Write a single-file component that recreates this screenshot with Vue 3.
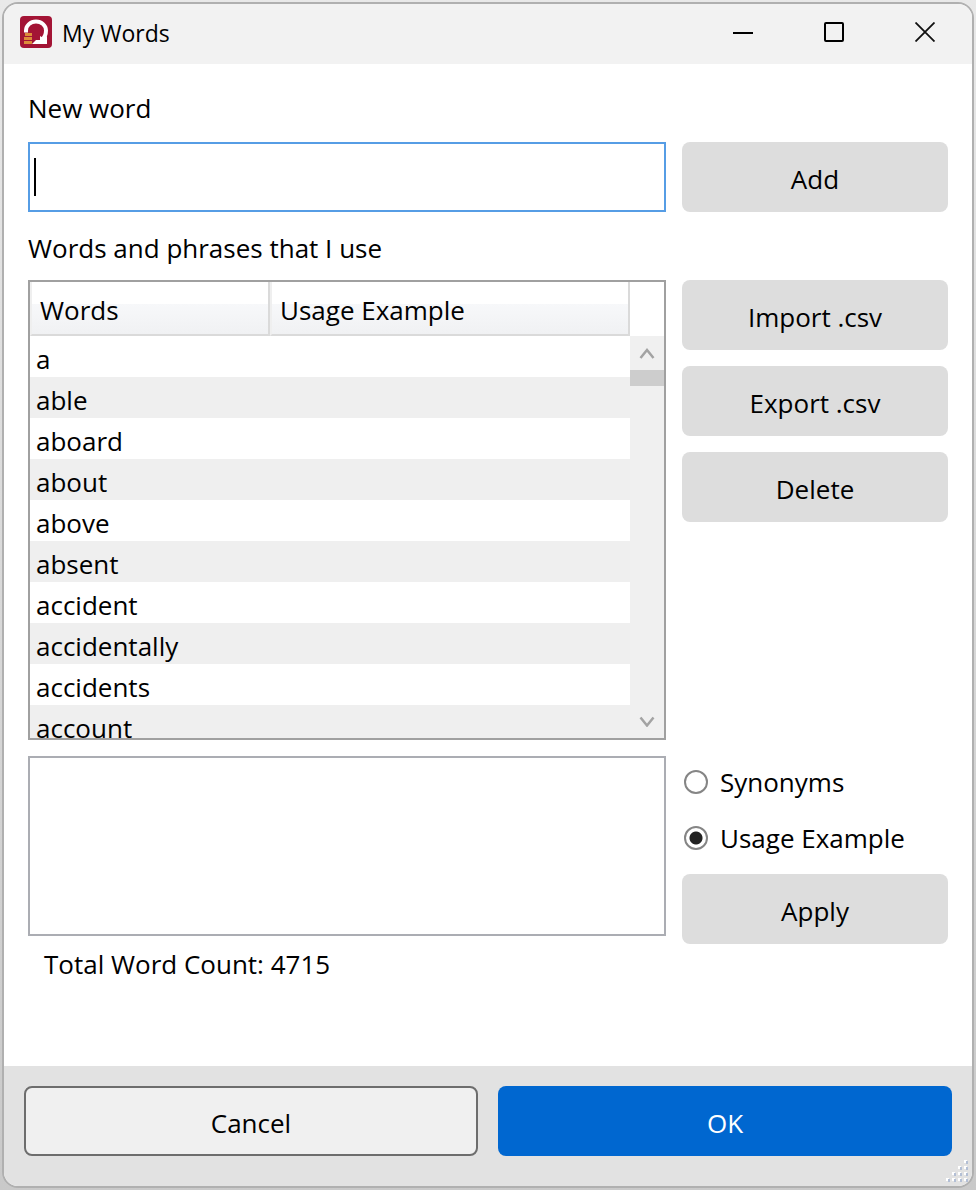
<script setup>
import { ref } from 'vue'

const WORDS = [
  'a', 'able', 'aboard', 'about', 'above',
  'absent', 'accident', 'accidentally', 'accidents', 'account',
]

const newWord = ref('')
const details = ref('')
const mode = ref('usage')
const total = ref(4715)
</script>

<template>
  <div class="window">
    <header class="titlebar">
      <svg class="logo" width="32" height="32" viewBox="0 0 32 32" aria-hidden="true">
        <rect width="32" height="32" rx="4" fill="#a31435" />
        <path d="M6 16.500V14.500A10 9 0 0 1 26 14.500C26 19 24.500 21.500 22 23.500" fill="none" stroke="#fff" stroke-width="4" />
        <path d="M12 28L16 24H20V20L24 22.500L27 20V28Z" fill="#fff" />
        <path d="M5 17h7v3H5zM4 21h8v3H4zM4 25h8v3H4z" fill="#dc8b3a" />
      </svg>
      <h1 class="titlebar__title">My Words</h1>
      <div class="titlebar__controls">
        <button type="button" class="winbtn" aria-label="Minimize">
          <svg width="20" height="20" viewBox="0 0 20 20"><path d="M0 11h20" stroke="#000" stroke-width="2" /></svg>
        </button>
        <button type="button" class="winbtn" aria-label="Maximize">
          <svg width="20" height="20" viewBox="0 0 20 20"><rect x="1" y="1" width="18" height="18" rx="1" fill="none" stroke="#000" stroke-width="2" /></svg>
        </button>
        <button type="button" class="winbtn" aria-label="Close">
          <svg width="20" height="20" viewBox="0 0 20 20"><path d="M0.500 0.500l19 19M19.500 0.500l-19 19" stroke="#111" stroke-width="1.800" /></svg>
        </button>
      </div>
    </header>

    <main class="content">
      <label class="label" for="new-word">New word</label>
      <div class="row">
        <div class="entry">
          <input id="new-word" v-model="newWord" type="text" class="entry__input" autocomplete="off" />
          <span v-if="!newWord" class="entry__caret"></span>
        </div>
        <button type="button" class="btn">Add</button>
      </div>

      <h2 class="label label--list">Words and phrases that I use</h2>
      <div class="row">
        <div class="list">
          <div class="list__view">
            <table class="words">
              <thead>
                <tr>
                  <th scope="col" class="words__word">Words</th>
                  <th scope="col">Usage Example</th>
                </tr>
              </thead>
              <tbody>
                <tr v-for="word in WORDS" :key="word">
                  <td>{{ word }}</td>
                  <td></td>
                </tr>
              </tbody>
            </table>
          </div>
          <div class="scroll">
            <button type="button" class="scroll__btn" aria-label="Scroll up">
              <svg width="16" height="12" viewBox="0 0 16 12"><path d="M1.500 11L8 3l6.500 8" fill="none" stroke="#a3a3a3" stroke-width="2.500" /></svg>
            </button>
            <div class="scroll__thumb"></div>
            <button type="button" class="scroll__btn scroll__btn--down" aria-label="Scroll down">
              <svg width="16" height="12" viewBox="0 0 16 12"><path d="M1.500 2.500L8 10.500l6.500-8" fill="none" stroke="#a3a3a3" stroke-width="2.500" /></svg>
            </button>
          </div>
        </div>
        <div class="actions">
          <button type="button" class="btn">Import .csv</button>
          <button type="button" class="btn">Export .csv</button>
          <button type="button" class="btn">Delete</button>
        </div>
      </div>

      <div class="row row--details">
        <div>
          <textarea v-model="details" class="details" aria-label="Details"></textarea>
          <p class="total">Total Word Count: {{ total }}</p>
        </div>
        <div class="options">
          <div class="options__modes">
            <label class="radio">
              <input v-model="mode" type="radio" name="mode" value="synonyms" />
              Synonyms
            </label>
            <label class="radio">
              <input v-model="mode" type="radio" name="mode" value="usage" />
              Usage Example
            </label>
          </div>
          <button type="button" class="btn">Apply</button>
        </div>
      </div>
    </main>

    <footer class="footer">
      <button type="button" class="btn btn--cancel">Cancel</button>
      <button type="button" class="btn btn--ok">OK</button>
      <svg class="grip" width="24" height="24" viewBox="0 0 24 24" aria-hidden="true">
        <g fill="#fff">
          <path d="M18 0h3v3h-3zM12 6h3v3h-3zM18 6h3v3h-3zM6 12h3v3h-3zM12 12h3v3h-3zM18 12h3v3h-3zM0 18h3v3H0zM6 18h3v3h-3zM12 18h3v3h-3zM18 18h3v3h-3z" />
        </g>
        <g fill="#b3bfd5">
          <path d="M20 1h2v3h-2zM14 7h2v3h-2zM20 7h2v3h-2zM8 13h2v3h-2zM14 13h2v3h-2zM20 13h2v3h-2zM2 19h2v3h-2zM8 19h2v3h-2zM14 19h2v3h-2zM20 19h2v3h-2z" />
        </g>
      </svg>
    </footer>
  </div>
</template>

<style>
body {
  margin: 0;
  background: linear-gradient(#e9e9e9, #c9c9c9);
}
#app {
  display: flex;
  min-height: 100vh;
  padding: 2px;
  box-sizing: border-box;
}
</style>

<style scoped>
* { box-sizing: border-box; }

.window {
  flex: 1;
  display: flex;
  flex-direction: column;
  position: relative;
  border: 2px solid #b0b0b0;
  border-radius: 16px;
  overflow: hidden;
  background: #fff;
  color: #000;
  font-family: 'Open Sans', 'Noto Sans', sans-serif;
  font-size: 26px;
  line-height: 36px;
}
button, input, textarea { font: inherit; color: inherit; margin: 0; }

/* Title bar */
.titlebar {
  display: flex;
  align-items: center;
  height: 60px;
  padding: 0 2px 4px 16px;
  background: #f2f2f2;
}
.titlebar__title {
  flex: 1;
  margin: 2px 0 0 10px;
  font-size: 23px;
  font-weight: 400;
}
.titlebar__controls { display: flex; align-self: stretch; }
.winbtn {
  width: 91px;
  padding: 0;
  border: none;
  background: none;
  display: grid;
  place-items: center;
}

/* Content */
.content {
  flex: 1;
  padding: 26px 24px 0;
}
.label {
  display: block;
  margin: 0 0 16px;
  font-size: 26px;
  font-weight: 400;
}
.label--list { margin: 18px 0 14px; }
.row {
  display: grid;
  grid-template-columns: 1fr 266px;
  gap: 16px;
}
.row--details { margin-top: 16px; }

.entry { position: relative; }
.entry__input {
  display: block;
  width: 100%;
  height: 70px;
  padding: 0 6px;
  border: 2px solid #569de5;
  border-radius: 0;
  outline: none;
  background: #fff;
}
.entry__caret {
  position: absolute;
  left: 6px; top: 16px;
  width: 2px; height: 38px;
  background: #000;
}

.btn {
  height: 70px;
  padding: 4px 16px 0;
  border: none;
  border-radius: 8px;
  background: #ddd;
}
.actions {
  display: flex;
  flex-direction: column;
  gap: 16px;
}

/* Word list */
.list {
  display: flex;
  height: 460px;
  border: 2px solid #a0a0a0;
}
.list__view { flex: 1; overflow: hidden; }
.words {
  width: 100%;
  table-layout: fixed;
  border-collapse: separate;
  border-spacing: 0;
}
.words th {
  height: 54px;
  padding: 4px 8px 0;
  border: solid #dadada;
  border-width: 0 2px 2px;
  border-left-color: #efefef;
  background: linear-gradient(#fff 42%, #f7f8fa 42%, #f0f1f3);
  font-weight: 400;
  text-align: left;
}
.words__word { width: 240px; }
.words td {
  height: 41px;
  padding: 4px 6px 0;
  line-height: 36px;
}
.words tbody tr:nth-child(even) { background: #efefef; }

.scroll {
  display: flex;
  flex-direction: column;
  width: 34px;
  margin-top: 54px;
  background: #f0f0f0;
}
.scroll__btn {
  height: 34px;
  padding: 0;
  border: none;
  background: none;
  display: grid;
  place-items: center;
}
.scroll__btn--down { margin-top: auto; }
.scroll__thumb { height: 16px; background: #cdcdcd; }

/* Details */
.details {
  display: block;
  width: 100%;
  height: 180px;
  padding: 6px;
  border: 2px solid #abadb3;
  border-radius: 0;
  outline: none;
  resize: none;
}
.total { margin: 10px 16px 0; }
.options {
  display: flex;
  flex-direction: column;
  gap: 18px;
  padding-top: 8px;
}
.options__modes {
  display: flex;
  flex-direction: column;
  gap: 20px;
}
.radio {
  display: flex;
  align-items: center;
  gap: 12px;
  padding-left: 2px;
}
.radio input {
  appearance: none;
  flex: none;
  width: 24px; height: 24px;
  border: 2px solid #858585;
  border-radius: 50%;
  background: #fff;
}
.radio input:checked {
  background: radial-gradient(circle, #222 6px, #fff 7px);
}

/* Footer */
.footer {
  position: relative;
  display: grid;
  grid-template-columns: 1fr 1fr;
  gap: 20px;
  padding: 20px 20px 30px;
  background: #e2e2e2;
}
.btn--cancel { border: 2px solid #6d6d6d; background: #f0f0f0; }
.btn--ok { background: #0067d0; color: #fff; }
.grip {
  position: absolute;
  right: 2px; bottom: 2px;
}
</style>
